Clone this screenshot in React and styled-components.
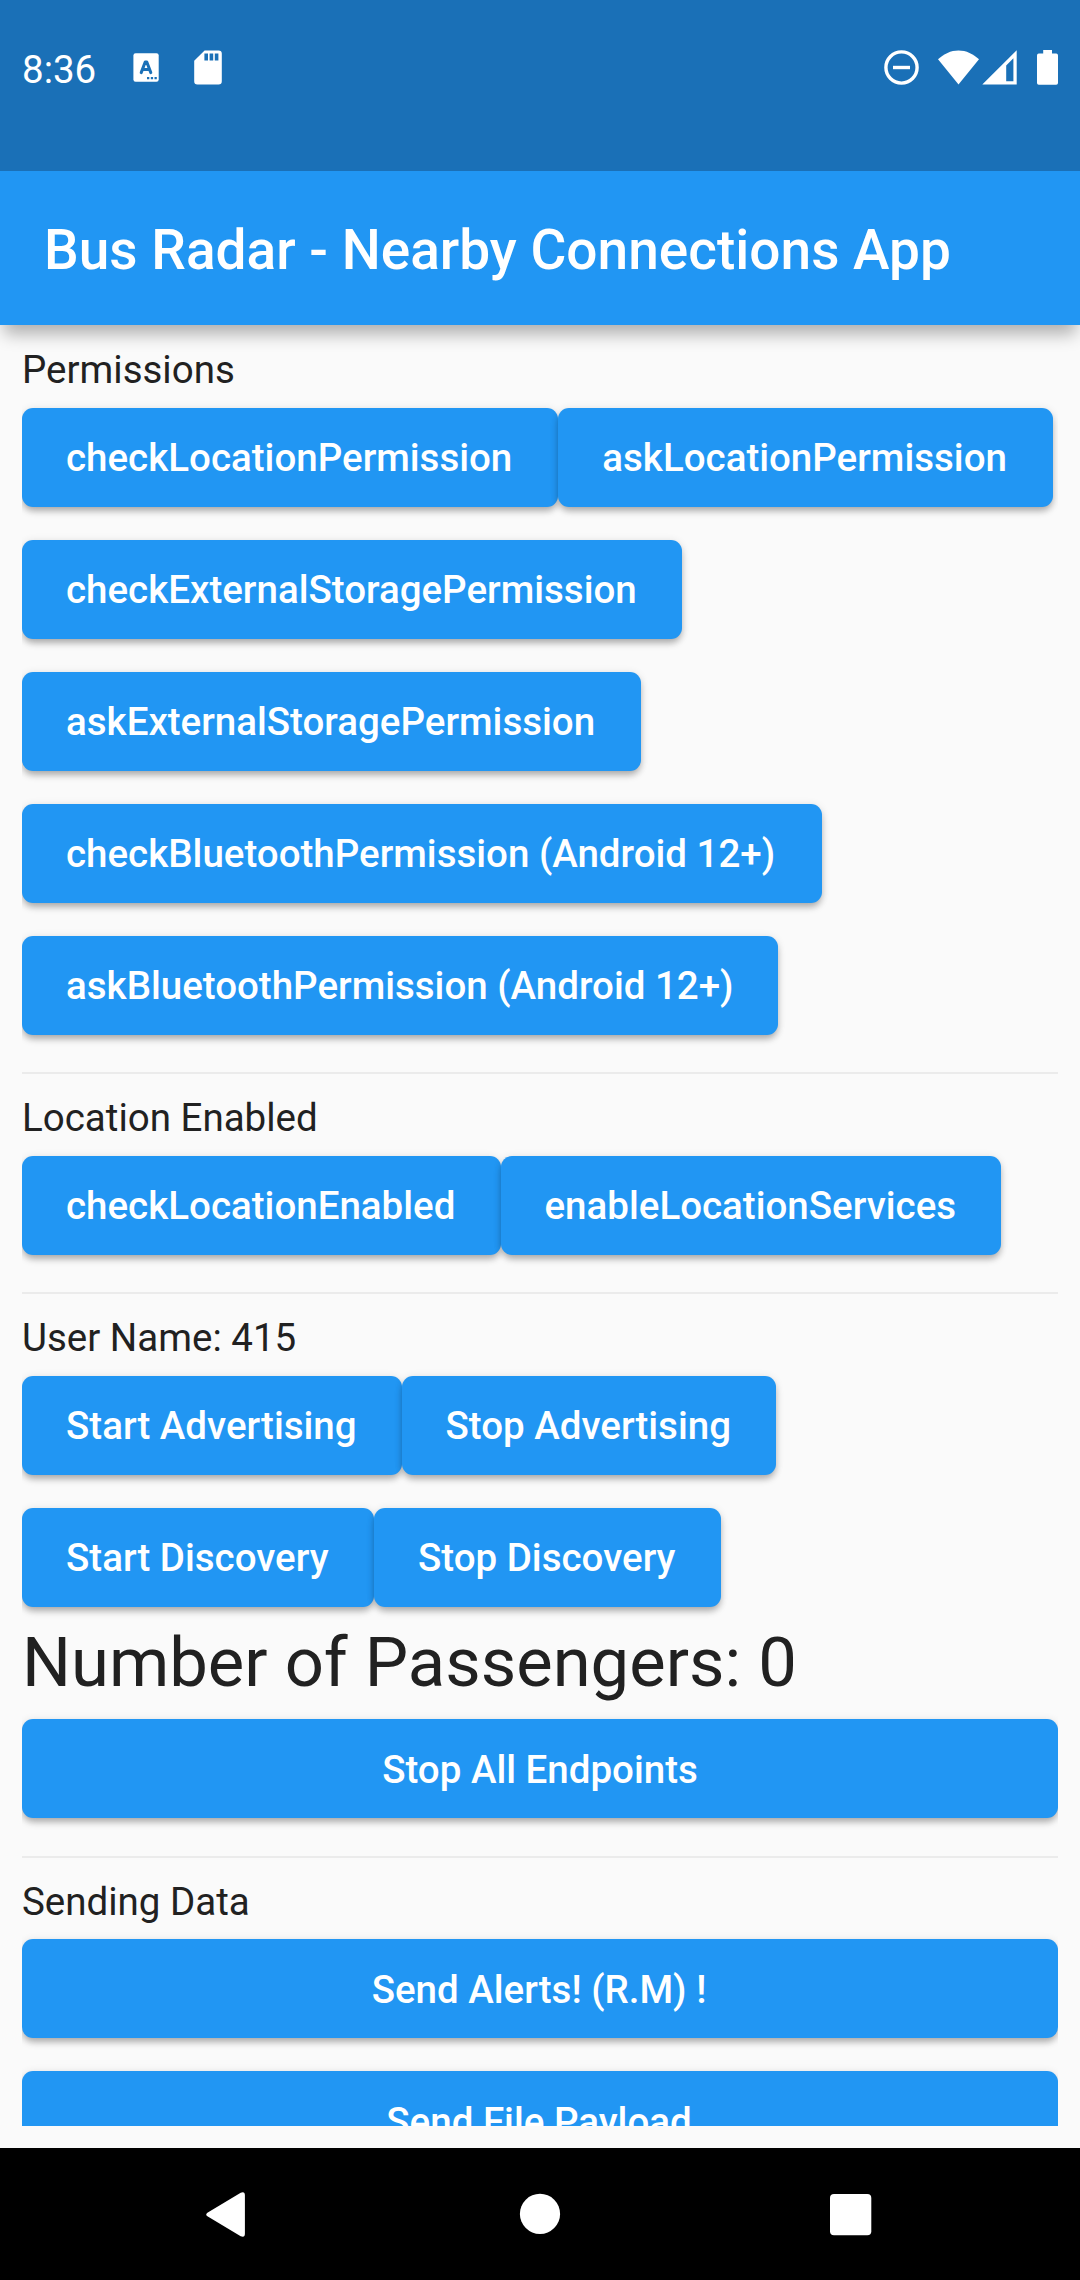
import React from 'react';
import styled, { createGlobalStyle } from 'styled-components';

const GlobalStyle = createGlobalStyle`
  *, *::before, *::after { box-sizing: border-box; }
  html, body { margin: 0; padding: 0; }
  body { background: #fafafa; overflow: hidden; }
`;

const Screen = styled.div`
  display: flex;
  flex-direction: column;
  width: 1080px;
  height: 2280px;
  overflow: hidden;
  background: #fafafa;
  color: #212121;
  font-family: Roboto, 'Liberation Sans', sans-serif;
`;

const StatusBar = styled.header`
  display: flex;
  align-items: flex-start;
  justify-content: space-between;
  flex: none;
  height: 171px;
  padding: 45px 22px 0 22px;
  position: relative;
  z-index: 2;
  background: #1a70b7;
  color: #fff;
`;

const StatusGroup = styled.div`
  display: flex;
  align-items: center;
  height: 45px;
`;

const Clock = styled.span`
  width: 75px;
  margin-right: 36px;
  font-size: 38.5px;
  line-height: 45px;
  padding-top: 4px;
`;

const Glyph = styled.svg`
  display: block;
  flex: none;
  width: ${(p) => p.$w}px;
  height: ${(p) => p.$h}px;
  margin-left: ${(p) => p.$gap || 0}px;
  overflow: visible;
`;

const AppBar = styled.div`
  display: flex;
  align-items: center;
  flex: none;
  height: 154px;
  padding: 4px 44px 0;
  position: relative;
  z-index: 1;
  background: #2196f3;
  box-shadow: 0 13px 16px -4px rgba(0, 0, 0, 0.3);
`;

const Title = styled.h1`
  margin: 0;
  color: #fff;
  font-size: 55px;
  font-weight: 500;
  line-height: 64px;
  white-space: nowrap;
`;

const Body = styled.main`
  display: flex;
  flex: 1;
  min-height: 0;
  padding: 22px;
`;

const List = styled.div`
  flex: 1;
  overflow: hidden;
`;

const Label = styled.p`
  margin: 0;
  height: 44px;
  font-size: 38.5px;
  line-height: 46px;
  white-space: nowrap;
`;

const Count = styled.p`
  margin: 0;
  height: 79.75px;
  font-size: 68.75px;
  line-height: 79.75px;
  white-space: nowrap;
`;

const Row = styled.div`
  display: flex;
  align-items: center;
  height: 132px;
`;

/* $units is the button width on the 2.75px density grid; without it the button fills its row. */
const Button = styled.button`
  flex: ${(p) => (p.$units ? 'none' : '1')};
  width: ${(p) => (p.$units ? `${p.$units * 2.75}px` : 'auto')};
  height: 99px;
  margin: 0;
  padding: 1.5px ${(p) => 44 + (p.$trail || 0)}px 0 44px;
  border: 0;
  border-radius: 11px;
  background: #2196f3;
  color: #fff;
  font-family: inherit;
  font-size: 38.5px;
  font-weight: 500;
  line-height: 45px;
  text-align: ${(p) => (p.$units ? 'left' : 'center')};
  white-space: nowrap;
  box-shadow: 0 5px 7px -1px rgba(0, 0, 0, 0.28), 0 1px 8px 0 rgba(0, 0, 0, 0.1);
`;

const Divider = styled.hr`
  height: 2px;
  margin: 21px 0;
  border: 0;
  background: #ebebeb;
`;

const NavBar = styled.nav`
  display: flex;
  align-items: flex-start;
  flex: none;
  height: 132px;
  padding: 44px 0 0 206px;
  background: #000;
`;

const KeyboardIcon = () => (
  <Glyph $w={26} $h={29} viewBox="0 0 26 29">
    <rect x="0.4" y="0.3" width="25.3" height="28.4" rx="2.2" fill="#fff" />
    <path d="M8.2 19.6 12.2 9h1.6l4 10.6M9.8 16.6h6.4" fill="none" stroke="#1a70b7" strokeWidth="3" strokeLinecap="round" strokeLinejoin="round" />
    <path d="M14 24.1h2.3v2.2H14zM17.8 24.1h2.3v2.2h-2.3zM21.5 24.1h2.3v2.2h-2.3z" fill="#1a70b7" />
  </Glyph>
);

const SdCardIcon = () => (
  <Glyph $w={28} $h={35} $gap={34.5} viewBox="0 0 28 35">
    <path d="M10.6.4h14a3.2 3.2 0 0 1 3.2 3.2v27.6a3.2 3.2 0 0 1-3.2 3.2H3.4a3.2 3.2 0 0 1-3.2-3.2V10.8z" fill="#fff" />
    <path d="M10.4 3.6h3.6v7h-3.6zM15.6 3.6h3.6v7h-3.6zM20.8 3.6h3.6v7h-3.6z" fill="#1a70b7" />
  </Glyph>
);

const DoNotDisturbIcon = () => (
  <Glyph $w={35} $h={35} viewBox="0 0 35 35">
    <circle cx="17.5" cy="17.5" r="15.6" fill="none" stroke="#fff" strokeWidth="3.4" />
    <path d="M9 15.8h17v3.4H9z" fill="#fff" />
  </Glyph>
);

const WifiIcon = () => (
  <Glyph $w={41} $h={35} $gap={19} viewBox="0 0 41 35">
    <path d="M20.5 34.6 0 9.3C5.7 3.8 12.8.4 20.5.4S35.3 3.8 41 9.3z" fill="#fff" />
  </Glyph>
);

const SignalIcon = () => (
  <Glyph $w={35} $h={35} $gap={3} viewBox="0 0 35 35">
    <path fillRule="evenodd" d="M.3 34.6 34.7.3v34.3zM24.2 15.5v15.8h7.2V8.3z" fill="#fff" />
  </Glyph>
);

const BatteryIcon = () => (
  <Glyph $w={21} $h={35} $gap={20} viewBox="0 0 21 35">
    <path d="M6.2 0h8.8v3.6h4.2A1.8 1.8 0 0 1 21 5.4v27.6a1.8 1.8 0 0 1-1.8 1.8H1.8A1.8 1.8 0 0 1 0 33V5.4a1.8 1.8 0 0 1 1.8-1.8h4.4z" fill="#fff" />
  </Glyph>
);

const permissionRows = [
  [
    { label: 'checkLocationPermission', units: 195 },
    { label: 'askLocationPermission', units: 180 },
  ],
  [{ label: 'checkExternalStoragePermission', units: 240 }],
  [{ label: 'askExternalStoragePermission', units: 225 }],
  [{ label: 'checkBluetoothPermission (Android 12+)', units: 291 }],
  [{ label: 'askBluetoothPermission (Android 12+)', units: 275 }],
];

const locationRows = [
  [
    { label: 'checkLocationEnabled', units: 174 },
    { label: 'enableLocationServices', units: 182 },
  ],
];

const userRows = [
  [
    { label: 'Start Advertising', units: 138 },
    { label: 'Stop Advertising', units: 136 },
  ],
  [
    { label: 'Start Discovery', units: 128 },
    { label: 'Stop Discovery', units: 126 },
  ],
];

const endpointRows = [[{ label: 'Stop All Endpoints' }]];

const sendRows = [
  [{ label: 'Send Alerts! (R.M) !', trail: 2 }],
  [{ label: 'Send File Payload', trail: 2 }],
];

const ButtonRows = ({ rows }) =>
  rows.map((buttons) => (
    <Row key={buttons[0].label}>
      {buttons.map(({ label, units, trail }) => (
        <Button key={label} type="button" $units={units} $trail={trail}>
          {label}
        </Button>
      ))}
    </Row>
  ));

export default function App() {
  return (
    <>
      <GlobalStyle />
      <Screen>
        <StatusBar>
          <StatusGroup>
            <Clock>8:36</Clock>
            <KeyboardIcon />
            <SdCardIcon />
          </StatusGroup>
          <StatusGroup>
            <DoNotDisturbIcon />
            <WifiIcon />
            <SignalIcon />
            <BatteryIcon />
          </StatusGroup>
        </StatusBar>
        <AppBar>
          <Title>Bus Radar - Nearby Connections App</Title>
        </AppBar>
        <Body>
          <List>
            <Label>Permissions</Label>
            <ButtonRows rows={permissionRows} />
            <Divider />
            <Label>Location Enabled</Label>
            <ButtonRows rows={locationRows} />
            <Divider />
            <Label>User Name: 415</Label>
            <ButtonRows rows={userRows} />
            <Count>Number of Passengers: 0</Count>
            <ButtonRows rows={endpointRows} />
            <Divider />
            <Label>Sending Data</Label>
            <ButtonRows rows={sendRows} />
          </List>
        </Body>
        <NavBar>
          <Glyph $w={39} $h={45} viewBox="0 0 39 45">
            <path d="M1.4 20.7 34.7.8Q38.9-.9 38.9 3.2v38.6q0 4.1-4.2 2.4L1.4 24.3q-2.4-1.8 0-3.6z" fill="#fff" />
          </Glyph>
          <Glyph $w={40} $h={44} $gap={275} viewBox="0 0 40 44">
            <circle cx="20" cy="21.9" r="20.1" fill="#fff" />
          </Glyph>
          <Glyph $w={42} $h={44} $gap={270} viewBox="0 0 42 44">
            <rect x="0" y="2" width="41.3" height="41.3" rx="4" fill="#fff" />
          </Glyph>
        </NavBar>
      </Screen>
    </>
  );
}
